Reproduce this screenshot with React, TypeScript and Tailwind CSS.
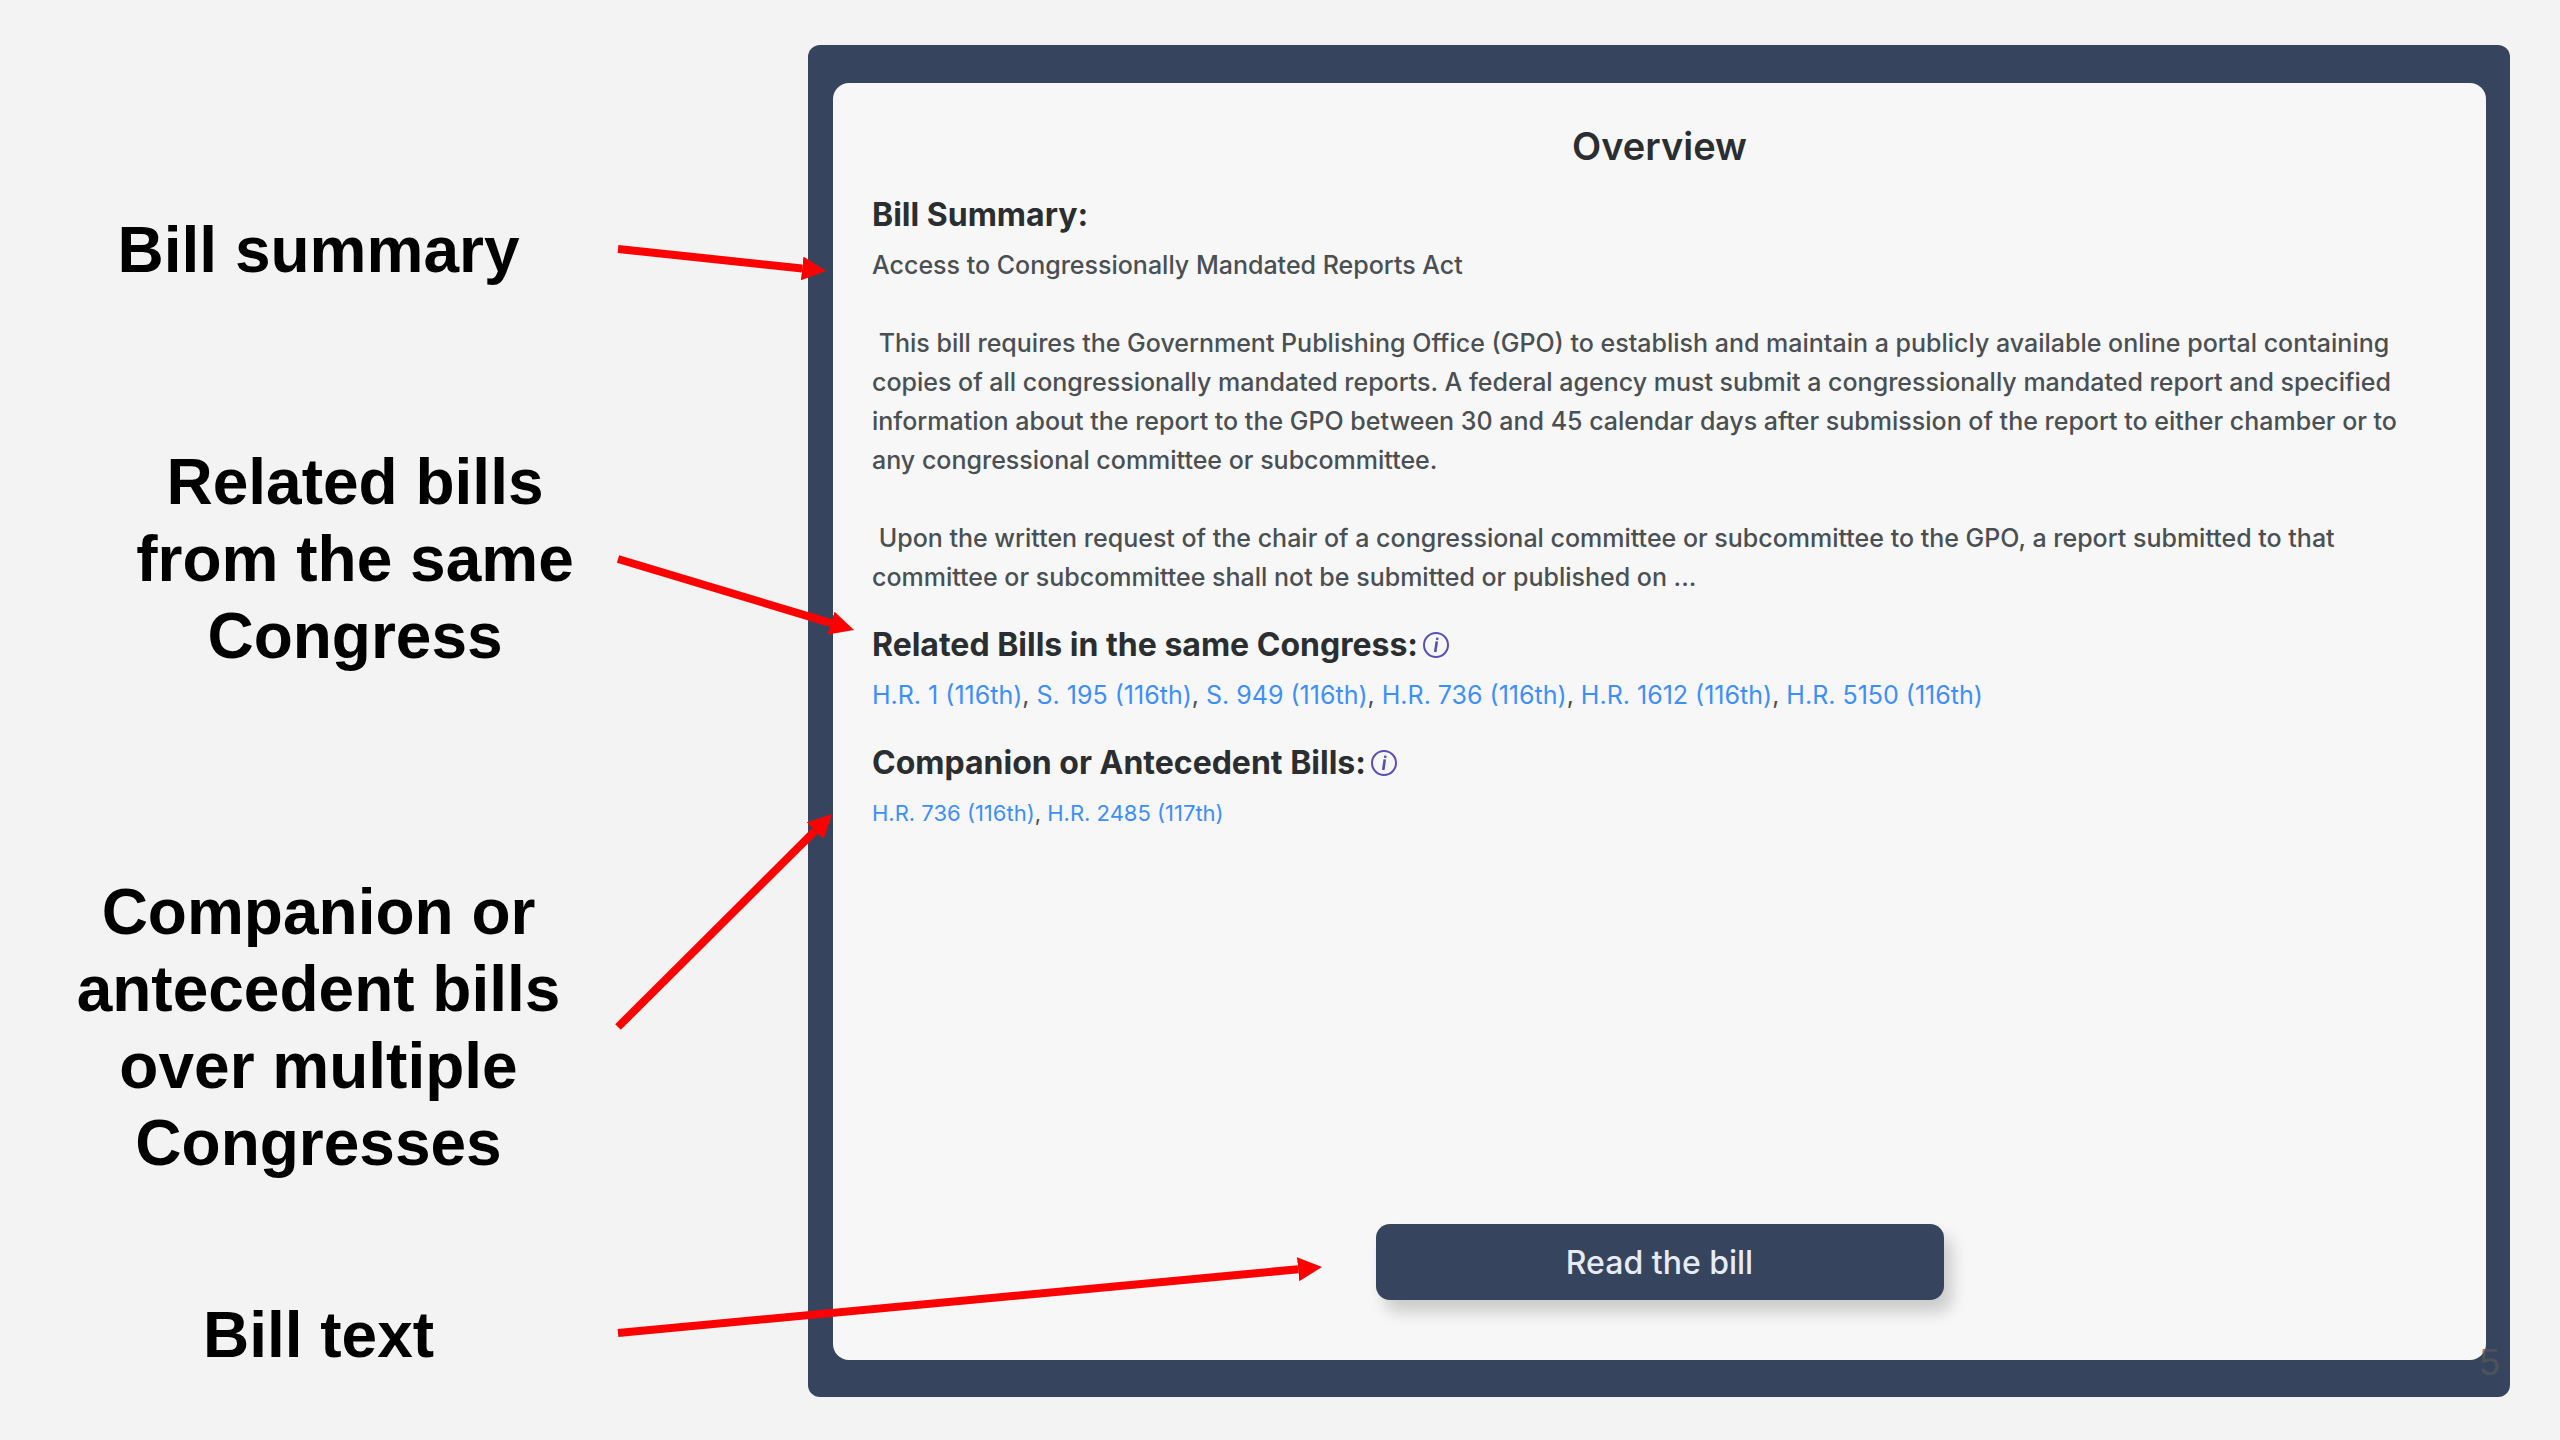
import type { ReactNode } from "react";

const relatedBills = [
  "H.R. 1 (116th)",
  "S. 195 (116th)",
  "S. 949 (116th)",
  "H.R. 736 (116th)",
  "H.R. 1612 (116th)",
  "H.R. 5150 (116th)",
];
const companionBills = ["H.R. 736 (116th)", "H.R. 2485 (117th)"];

const arrows = [
  { x1: 618, y1: 249, x2: 826, y2: 271 },
  { x1: 618, y1: 559, x2: 854, y2: 630 },
  { x1: 618, y1: 1027, x2: 832, y2: 814 },
  { x1: 618, y1: 1333, x2: 1322, y2: 1267 },
];

function InfoIcon() {
  return (
    <svg viewBox="0 0 28 28" className="size-7" fill="none" stroke="#5a4fb8" aria-hidden="true">
      <circle cx="14" cy="14" r="12" strokeWidth="2" />
      <path d="M15.4 6.6 L15.1 9" strokeWidth="2.4" />
      <path d="M14.8 10.4 L13.2 21" strokeWidth="2.6" />
    </svg>
  );
}

function SectionHeading({ children, info }: { children: ReactNode; info?: boolean }) {
  return (
    <h2 className="flex items-center gap-1 text-[32px] leading-[48px] font-bold text-[#2b2e31]">
      {children}
      {info && (
        <button type="button" aria-label="More information">
          <InfoIcon />
        </button>
      )}
    </h2>
  );
}

function BillLinks({ bills }: { bills: string[] }) {
  return (
    <>
      {bills.map((bill, i) => (
        <span key={bill}>
          {i > 0 && ", "}
          <a href="#" className="text-[#3d8ffb]">
            {bill}
          </a>
        </span>
      ))}
    </>
  );
}

function Callouts() {
  return (
    <aside className="w-[808px] shrink-0 pt-[212px] text-center font-['Liberation_Sans',sans-serif] text-[64px] leading-[77px] font-bold text-black">
      <p className="w-[637px]">Bill summary</p>
      <p className="mt-[155px] w-[710px]">
        Related bills
        <br />
        from the same
        <br />
        Congress
      </p>
      <p className="mt-[199px] w-[637px]">
        Companion or
        <br />
        antecedent bills
        <br />
        over multiple
        <br />
        Congresses
      </p>
      <p className="mt-[115px] w-[637px]">Bill text</p>
    </aside>
  );
}

function Arrows() {
  return (
    <svg
      viewBox="0 0 2560 1440"
      preserveAspectRatio="xMinYMin meet"
      className="pointer-events-none absolute inset-0 size-full"
      aria-hidden="true"
    >
      <defs>
        <marker id="head" markerUnits="userSpaceOnUse" markerWidth="24" markerHeight="24" refX="0" refY="12" orient="auto">
          <path d="M0 0 L24 12 L0 24 Z" fill="#ff0000" />
        </marker>
      </defs>
      {arrows.map((a) => {
        const length = Math.hypot(a.x2 - a.x1, a.y2 - a.y1);
        const t = (length - 24) / length;
        return (
          <line
            key={a.y1}
            x1={a.x1}
            y1={a.y1}
            x2={a.x1 + (a.x2 - a.x1) * t}
            y2={a.y1 + (a.y2 - a.y1) * t}
            stroke="#ff0000"
            strokeWidth="8"
            markerEnd="url(#head)"
          />
        );
      })}
    </svg>
  );
}

export default function App() {
  return (
    <div className="relative flex min-h-screen bg-[#f3f3f3]">
      <Callouts />
      <main className="mt-[45px] mr-[50px] mb-[43px] flex flex-1 rounded-[12px] bg-[#36445d] pt-[38px] pr-[24px] pb-[37px] pl-[25px] font-['Inter',sans-serif]">
        <section className="flex flex-1 flex-col rounded-[16px] bg-[#f7f7f7] px-[39px] text-[25px] leading-[39px] text-[#4a4f53]">
          <h1 className="mt-[33px] text-center text-[38px] leading-[60px] font-semibold text-[#2b2e31]">Overview</h1>

          <div className="mt-[15px]">
            <SectionHeading>Bill Summary:</SectionHeading>
            <div className="mt-[7px] font-medium">
              <p>Access to Congressionally Mandated Reports Act</p>
              <p className="mt-[39px] whitespace-pre">
                {" This bill requires the Government Publishing Office (GPO) to establish and maintain a publicly available online portal containing\n"}
                {"copies of all congressionally mandated reports. A federal agency must submit a congressionally mandated report and specified\n"}
                {"information about the report to the GPO between 30 and 45 calendar days after submission of the report to either chamber or to\n"}
                {"any congressional committee or subcommittee."}
              </p>
              <p className="mt-[39px] whitespace-pre">
                {" Upon the written request of the chair of a congressional committee or subcommittee to the GPO, a report submitted to that\n"}
                {"committee or subcommittee shall not be submitted or published on ..."}
              </p>
            </div>
          </div>

          <div className="mt-6">
            <SectionHeading info>Related Bills in the same Congress:</SectionHeading>
            <p className="mt-[7px]">
              <BillLinks bills={relatedBills} />
            </p>
          </div>

          <div className="mt-6">
            <SectionHeading info>Companion or Antecedent Bills:</SectionHeading>
            <p className="mt-[7px] text-[22px]">
              <BillLinks bills={companionBills} />
            </p>
          </div>

          <button
            type="button"
            className="mt-auto mb-[60px] h-[76px] w-[568px] self-center rounded-[14px] bg-[#36445d] text-[32px] font-medium text-[#e6ecf5] shadow-[8px_12px_16px_rgba(0,0,0,0.18)]"
          >
            Read the bill
          </button>
        </section>
      </main>
      <Arrows />
      <span className="absolute right-[60px] bottom-[57px] font-['Liberation_Sans',sans-serif] text-[37px] leading-10 text-[#595959]/70">
        5
      </span>
    </div>
  );
}
